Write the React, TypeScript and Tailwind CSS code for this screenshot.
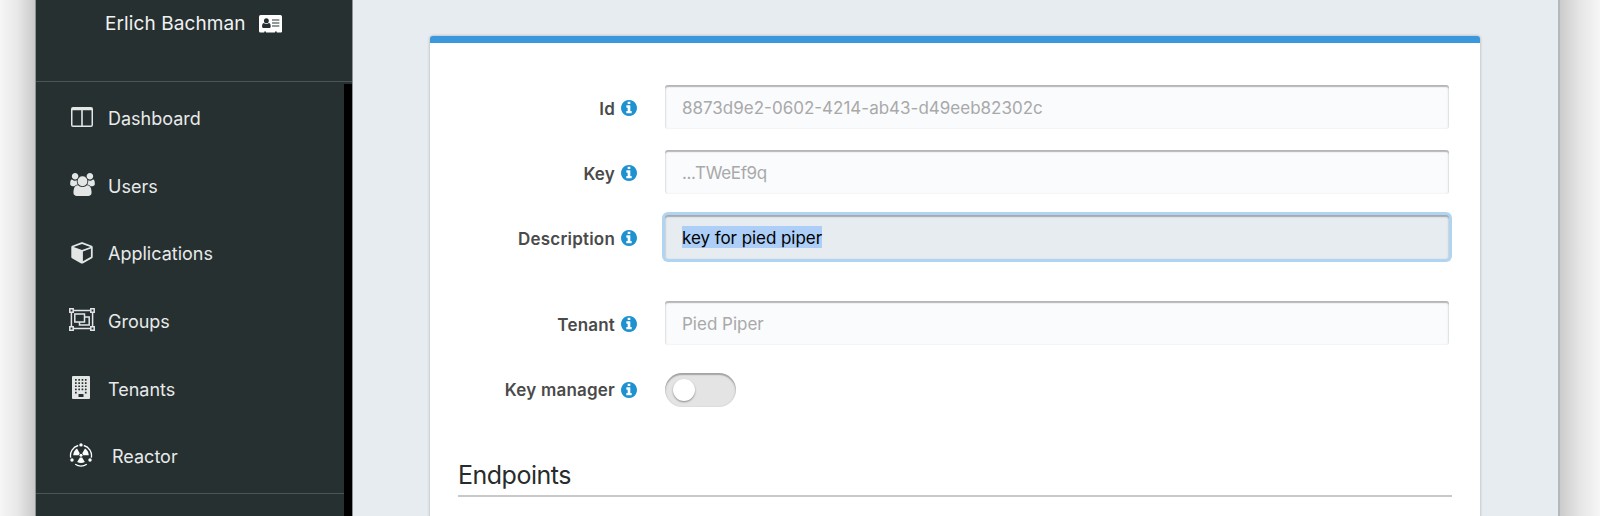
import type { ReactNode } from "react";

function InfoIcon() {
  return (
    <svg viewBox="128 128 1536 1536" className="size-4 fill-[#1e91d0]">
      <path d="M1152 1376v-160q0-14-9-23t-23-9h-96v-512q0-14-9-23t-23-9h-320q-14 0-23 9t-9 23v160q0 14 9 23t23 9h96v320h-96q-14 0-23 9t-9 23v160q0 14 9 23t23 9h448q14 0 23-9t9-23zm-128-896v-160q0-14-9-23t-23-9h-192q-14 0-23 9t-9 23v160q0 14 9 23t23 9h192q14 0 23-9t9-23zm640 416q0 209-103 385.5t-279.5 279.5-385.5 103-385.5-103-279.5-279.5-103-385.5 103-385.5 279.5-279.5 385.5-103 385.5 103 279.500 279.500 103 385.500z" />
    </svg>
  );
}

function AddressCardIcon() {
  return (
    <svg viewBox="0 0 24 18" className="h-[18px] w-[23px] fill-white" preserveAspectRatio="none">
      <path
        fillRule="evenodd"
        d="M1.7 0h20.6Q24 0 24 1.7v14.8q0 1-1 1h-4.500v-.9h-1.800v.9H7.300v-.9H5.500v.9H1.500Q0 17.500 0 16V1.700Q0 0 1.700 0ZM4.500 13h6.400c.800 0 1.300-.600 1.300-1.500c0-1.700-.5-3.500-2.100-3.500c-.6.600-1.300 1-2.400 1s-1.800-.4-2.400-1c-1.600 0-2.100 1.800-2.100 3.500c0 .9.600 1.500 1.300 1.500ZM7.700 8.300a2.500 2.500 0 1 0 0-5.100a2.500 2.500 0 0 0 0 5.100ZM13.600 4.500v1.100h7.600v-1.100ZM13.600 7.500v1.100h7.600v-1.100ZM13.600 10.500v1.100h7.600v-1.100Z"
      />
    </svg>
  );
}

function ColumnsIcon() {
  return (
    <svg viewBox="0 0 22 20" className="h-5 w-[22px]">
      <path
        fillRule="evenodd"
        d="M2 0h18a2 2 0 0 1 2 2v16a2 2 0 0 1-2 2H2a2 2 0 0 1-2-2V2a2 2 0 0 1 2-2ZM1.500 3.200v14.700q0 .500.500.500h8.200V3.200ZM11.800 3.200v15.200H20q.5 0 .5-.5V3.200Z"
      />
    </svg>
  );
}

function UsersIcon() {
  return (
    <svg viewBox="0 0 1920 1792" className="h-[23px] w-[25px]">
      <path d="M593 896q-162 5-265 128H194q-82 0-138-40.500T0 865q0-353 124-353 6 0 43.500 21t97.500 42.500T384 597q67 0 133-23-5 37-5 66 0 139 81 256zm1071 637q0 120-73 189.500t-194 69.500H523q-121 0-194-69.500T256 1533q0-53 3.500-103.500t14-109T300 1212t43-97.500 62-81 85.500-53.500T602 960q10 0 43 21.500t73 48 107 48 135 21.500 135-21.500 107-48 73-48 43-21.500q61 0 111.500 20t85.500 53.500 62 81 43 97.500 26.500 108.500 14 109 3.500 103.500zM640 256q0 106-75 181t-181 75-181-75-75-181 75-181T384 0t181 75 75 181zm704 384q0 159-112.500 271.500T960 1024 688.500 911.500 576 640t112.500-271.500T960 256t271.500 112.500T1344 640zm576 225q0 78-56 118.500t-138 40.500h-134q-103-123-265-128 81-117 81-256 0-29-5-66 66 23 133 23 59 0 119-21.500t97.500-42.500 43.500-21q124 0 124 353zm-128-609q0 106-75 181t-181 75-181-75-75-181 75-181 181-75 181 75 75 181z" />
    </svg>
  );
}

function CubeIcon() {
  return (
    <svg viewBox="0 0 22 22" className="size-[22px]">
      <path
        fillRule="evenodd"
        d="M10.400.3q.6-.300 1.200 0l9.200 3.400q.900.400.900 1.300v10.100q0 .8-.7 1.200l-9.200 5.100q-.8.400-1.600 0L1 16.300q-.700-.400-.700-1.200V5q0-.900.900-1.300ZM11 1.900 2.600 5 11 8l8.400-3ZM11.900 19.200l8-4.400V6.600l-8 2.900Z"
      />
    </svg>
  );
}

function ObjectGroupIcon() {
  return (
    <svg viewBox="0 0 26 23" className="h-[23px] w-[26px] fill-none stroke-[#e4e6e6] stroke-[1.500]">
      <path d="M4.200 2.400h17.600M4.200 20.600h17.600M2.400 4.200v14.600M23.600 4.200v14.600" />
      <path d="M.8.800h3.400v3.400H.8ZM21.800.800h3.400v3.400h-3.400ZM.8 18.800h3.400v3.400H.8ZM21.800 18.800h3.400v3.400h-3.400Z" />
      <path d="M5.800 5.900h9.700v8H5.800Z" />
      <path d="M15.500 9.100h4.700v8h-9.700v-3.200" />
    </svg>
  );
}

const windowRows = [3, 6.2, 9.4, 12.6, 15.8];
const windowCols = [3, 6.3, 9.6, 12.9];

function BuildingIcon() {
  return (
    <svg viewBox="0 0 18 23" className="h-[23px] w-[18px]">
      <rect width="18" height="23" rx="1" />
      <g className="fill-[#263030]">
        {windowRows.map((y, r) =>
          windowCols.map((x, c) =>
            r === 4 && (c === 1 || c === 2) ? null : (
              <rect key={`${x}-${y}`} x={x} y={y} width="1.700" height="1.700" rx=".3" />
            ),
          ),
        )}
        <rect x="6.500" y="18" width="5" height="3" rx=".3" />
      </g>
    </svg>
  );
}

const bladePath = "M10.900 14.400h2.200l2.700 4.700q-3.800 1.800-7.600 0Z";

function ReactorIcon() {
  return (
    <svg viewBox="0 0 24 24" className="size-6 fill-white">
      <path
        className="fill-none stroke-white stroke-[1.300]"
        d="M14.800 2.500A10.500 10.500 0 0 1 22.300 14.700M17.800 21.200A10.500 10.500 0 0 1 6.200 21.200M1.700 14.700A10.500 10.500 0 0 1 9.200 2.500"
      />
      <circle cx="12" cy="1.900" r="1.700" />
      <circle cx="21" cy="17" r="1.700" />
      <circle cx="3" cy="17" r="1.700" />
      <circle cx="12" cy="12.300" r="1.500" />
      <path d={bladePath} />
      <path d={bladePath} transform="rotate(120 12 12.300)" />
      <path d={bladePath} transform="rotate(240 12 12.300)" />
    </svg>
  );
}

const menu: { label: string; icon: ReactNode; iconClass: string; labelClass: string }[] = [
  { label: "Dashboard", icon: <ColumnsIcon />, iconClass: "pb-[2px]", labelClass: "pt-[2px]" },
  { label: "Users", icon: <UsersIcon />, iconClass: "pb-[3px]", labelClass: "pt-[2px]" },
  { label: "Applications", icon: <CubeIcon />, iconClass: "pb-[1px]", labelClass: "pt-[1px]" },
  { label: "Groups", icon: <ObjectGroupIcon />, iconClass: "pb-[3px]", labelClass: "pt-[2px]" },
  { label: "Tenants", icon: <BuildingIcon />, iconClass: "pr-[2px] pb-[3px]", labelClass: "pt-[2px]" },
  { label: "Reactor", icon: <ReactorIcon />, iconClass: "pr-[3px] pb-[3px]", labelClass: "pt-[1px] pl-1" },
];

function Sidebar() {
  return (
    <aside className="flex w-[317px] shrink-0 flex-col border-r border-[#8d9597] bg-[#263030]">
      <div className="flex h-[82px] shrink-0 items-start border-b border-[#4b5556] pt-[10px] pl-[69px]">
        <span className="w-[154px] text-[19px] leading-7 tracking-[0.1px] text-[#f1f2f2]">Erlich Bachman</span>
        <span className="pt-[5px]">
          <AddressCardIcon />
        </span>
      </div>
      <div className="flex grow pt-[2px]">
        <nav className="grow">
          <ul className="h-[410px] border-b border-[#4b5556]">
            {menu.map((item) => (
              <li key={item.label} className="flex h-[67.7px] items-center pl-[29px] text-[18px] text-[#e8eaea]">
                <span className="flex w-[43px] fill-[#e4e6e6] pr-[9px]">
                  <span className={`flex w-[34px] shrink-0 justify-center ${item.iconClass}`}>{item.icon}</span>
                </span>
                <span className={item.labelClass}>{item.label}</span>
              </li>
            ))}
          </ul>
        </nav>
        <div className="w-2 bg-black" />
      </div>
    </aside>
  );
}

function Field({ label, raised = false, children }: { label: string; raised?: boolean; children: ReactNode }) {
  return (
    <div className="flex items-center">
      <div className={`flex w-[207px] shrink-0 items-center justify-end gap-[6px] ${raised ? "pb-[3px]" : ""}`}>
        <span className="pt-[3px] text-[17px] leading-6 font-semibold tracking-[0.2px] text-[#4a4a4a]">{label}</span>
        <span className="pt-[2px]">
          <InfoIcon />
        </span>
      </div>
      <div className="ml-7 grow">{children}</div>
    </div>
  );
}

function DisabledInput({ value, textClass = "" }: { value: string; textClass?: string }) {
  return (
    <div className="mr-[31px] flex h-11 items-center rounded-[3px] bg-[#fafbfd] pt-[3px] pl-[17px] text-[17px] text-[#a9a9a9] shadow-[inset_0_1px_2px_1px_rgba(0,0,0,0.1),inset_0_2px_1px_rgba(0,0,0,0.2)]">
      <span className={textClass}>{value}</span>
    </div>
  );
}

export default function App() {
  return (
    <div className="flex h-[516px] w-[1600px] overflow-hidden font-['Inter',sans-serif]">
      <div className="w-9 shrink-0 border-r border-[#8d9191] bg-linear-to-r from-[#f6f6f6] via-[#e8e8e8] to-[#c9c9c9]" />
      <Sidebar />
      <main className="w-[1205px] shrink-0 bg-[#e7ecf0] pt-9 pl-[77px]">
        <section className="h-[500px] w-[1050px] overflow-hidden rounded-t-[3px] border-t-[7px] border-[#3c98dd] bg-white shadow-[0_0_3px_rgba(0,0,0,0.3)]">
          <div className="flex flex-col gap-[21px] pt-[42px]">
            <Field label="Id">
              <DisabledInput value="8873d9e2-0602-4214-ab43-d49eeb82302c" />
            </Field>
            <Field label="Key">
              <DisabledInput value="...TWeEf9q" textClass="tracking-[-0.35px]" />
            </Field>
            <Field label="Description">
              <div className="mr-[31px] flex h-11 items-center rounded-[3px] bg-[#e7ecf0] pl-[17px] text-[17px] tracking-[-0.05px] text-black shadow-[inset_0_1px_2px_1px_rgba(0,0,0,0.1),inset_0_2px_1px_rgba(0,0,0,0.2),0_0_0_3px_#b0d5f2]">
                <span className="h-[22px] bg-[#accef7] leading-[24px]">key for pied piper</span>
              </div>
            </Field>
          </div>
          <div className="pt-[42px]">
            <Field label="Tenant">
              <DisabledInput value="Pied Piper" />
            </Field>
          </div>
          <div className="pt-7">
            <Field label="Key manager" raised>
              <div className="flex h-[34px] w-[71px] items-center rounded-full bg-[#e4e4e4] pb-px pl-[8px] shadow-[inset_0_1px_2px_1px_rgba(0,0,0,0.1),inset_0_2px_1px_rgba(0,0,0,0.2)]">
                <div className="size-[22px] rounded-full bg-white shadow-[0_1px_2px_rgba(0,0,0,0.4)]" />
              </div>
            </Field>
          </div>
          <h2 className="mr-7 ml-7 mt-[50px] h-[40px] border-b-2 border-[#c9c9c9] text-[25px] leading-9 tracking-[-0.5px] text-[#282c2c]">
            Endpoints
          </h2>
        </section>
      </main>
      <div className="grow border-l-2 border-[#b5b8ba] bg-linear-to-r from-[#cccccc] via-[#e6e6e6] to-[#f6f6f6]" />
    </div>
  );
}
